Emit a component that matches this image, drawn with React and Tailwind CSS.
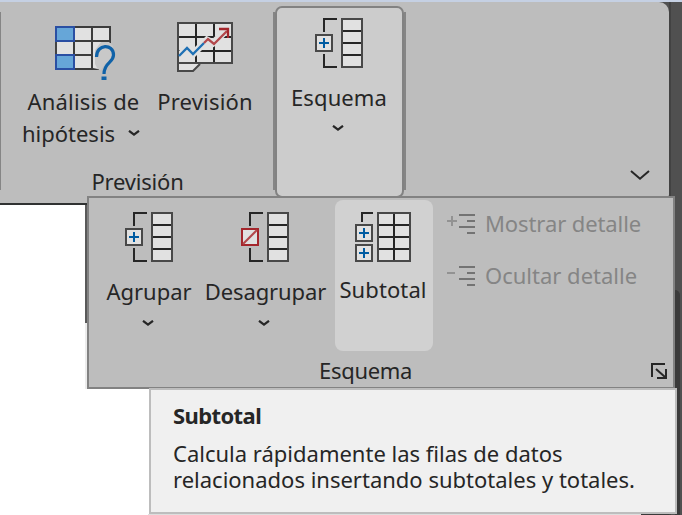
import clsx from "clsx";

function Chevron({ className }) {
  return (
    <svg className={clsx("h-[6px] w-[12px] shrink-0", className)} viewBox="0 0 12 6" fill="none">
      <path d="M1 0.8L6 4.6L11 0.8" stroke="#262626" strokeWidth="2.2" />
    </svg>
  );
}

function WhatIfIcon() {
  return (
    <svg className="h-[56px] w-[62px]" viewBox="0 0 62 56" fill="none">
      <path d="M1 1H55V17H37V43H1Z" fill="#e1e1e1" />
      <path d="M1 43H44M1 1H55V17M1 15H54M1 29H37M19 1V43M37 1V43" stroke="#3c3c3c" strokeWidth="2" />
      <path d="M38 20L44 16H54L58 20V32L50 38L46 44L38 42Z" fill="#c8c8c8" />
      <path d="M38 16H46L40 24V38L42 42H38Z" fill="#e1e1e1" />
      <path d="M1 1H19V15H1ZM1 29H19V43H1Z" fill="#66a6d8" stroke="#2a4fa3" strokeWidth="2" />
      <path d="M1 16V28" stroke="#444" strokeWidth="2" />
      <path d="M41.5 31C41.5 17.5 58.5 17.5 58.5 29C58.5 37 49 36 49 48" stroke="#1062a8" strokeWidth="3.2" />
      <path d="M46.5 50.5H51.5V54H46.5Z" fill="#1062a8" />
    </svg>
  );
}

function ForecastIcon() {
  return (
    <svg className="h-[50px] w-[56px]" viewBox="0 0 56 50" fill="none">
      <path d="M1 1H55V41H23L16 49H1Z" fill="#e1e1e1" />
      <path d="M19 1V41M37 1V41M1 15H54M1 29H54" stroke="#262626" strokeWidth="2" />
      <path d="M2 34L10 26L16 32L30 18L36 21L50 8" stroke="#e1e1e1" strokeWidth="7" />
      <path d="M1 1H55V41H1ZM1 41V49H16L23 42" stroke="#484848" strokeWidth="2" />
      <path d="M2 34L10 26L16 32L27 21" stroke="#1e70b4" strokeWidth="2.3" />
      <path d="M27 21L31 17L37 22L50 9" stroke="#b2474b" strokeWidth="2.3" />
      <path d="M42 7H51V16" stroke="#a4262c" strokeWidth="2.3" />
    </svg>
  );
}

function OutlineIcon({ removed }) {
  return (
    <svg className="h-[50px] w-[48px]" viewBox="0 0 48 50" fill="none">
      <path d="M22 1H9V14M9 36V49H22" stroke="#262626" strokeWidth="2" />
      <path d="M27 1H47V49H27Z" fill="#e1e1e1" stroke="#484848" strokeWidth="2" />
      <path d="M28 13H46M28 25H46M28 37H46" stroke="#262626" strokeWidth="2" />
      <path d="M1 17H17V33H1Z" fill="#e1e1e1" stroke={removed ? "#a4262c" : "#484848"} strokeWidth="2" />
      {removed ? (
        <path d="M2 32L16 18" stroke="#b2474b" strokeWidth="2" />
      ) : (
        <path d="M4 25H14M9 20V30" stroke="#005ba1" strokeWidth="2" />
      )}
    </svg>
  );
}

function SubtotalIcon() {
  return (
    <svg className="h-[50px] w-[56px]" viewBox="0 0 56 50" fill="none">
      <path d="M18 1H7V10" stroke="#262626" strokeWidth="2" />
      <path d="M1 13H17V29H1ZM1 33H17V49H1ZM23 1H55V49H23Z" fill="#e1e1e1" stroke="#484848" strokeWidth="2" />
      <path d="M24 13H54M24 25H54M24 37H54M39 2V48" stroke="#262626" strokeWidth="2" />
      <path d="M4 21H14M9 16V26M4 41H14M9 36V46" stroke="#005ba1" strokeWidth="2" />
    </svg>
  );
}

function DetailIcon({ plus }) {
  return (
    <svg className="h-[22px] w-[28px] shrink-0" viewBox="0 0 28 22" fill="none">
      <path d={plus ? "M0 8H10M5 3V13" : "M0 8H8"} stroke="#929292" strokeWidth="2" />
      <path d="M12 2H28M20 8H28M12 14H28M20 20H28" stroke="#737373" strokeWidth="2" />
    </svg>
  );
}

function Ribbon() {
  return (
    <div className="flex h-[203px] w-[669px] rounded-r-[10px] border-b-2 border-[#303232] bg-[#bdbdbd]">
      <div className="mt-[10px] h-[178px] w-px bg-[#858585]" />
      <div className="flex w-[272px] flex-col">
        <div className="flex h-[163px]">
          <div className="ml-[21px] flex w-[120px] flex-col items-center pt-[24px]">
            <div className="ml-[8px] flex w-[62px]">
              <WhatIfIcon />
            </div>
            <div className="mt-[3px] pl-[3px] leading-[32px] tracking-[0.2px] whitespace-nowrap">Análisis de</div>
            <div className="mr-[2px] flex items-center gap-[13px] leading-[32px]">
              <span>hipótesis</span>
              <Chevron />
            </div>
          </div>
          <div className="ml-[10px] flex w-[106px] flex-col items-center pt-[20px]">
            <ForecastIcon />
            <div className="mt-[13px] leading-[32px] tracking-[0.2px]">Previsión</div>
          </div>
        </div>
        <div className="pl-px text-center leading-[32px] tracking-[-0.2px]">Previsión</div>
      </div>
      <div className="mt-[10px] h-[178px] w-[2px] bg-[#858585]" />
      <div className="mt-[4px] flex h-[192px] w-[129px] flex-col items-center rounded-[7px] border-2 border-[#828282] bg-[#cccccc] pt-[10px] pr-[2px]">
        <OutlineIcon />
        <div className="mt-[13px] pl-px leading-[32px] tracking-[0.1px]">Esquema</div>
        <Chevron className="mt-[12px] mr-[2px]" />
      </div>
      <div className="mt-[10px] h-[178px] w-[2px] bg-[#858585]" />
      <div className="flex flex-1 items-end justify-end pr-[19px] pb-[23px]">
        <svg className="h-[10px] w-[20px]" viewBox="0 0 20 10" fill="none">
          <path d="M1 1L10 8.7L19 1" stroke="#262626" strokeWidth="2" />
        </svg>
      </div>
    </div>
  );
}

function OutlineMenu() {
  return (
    <div className="absolute top-[196px] left-[87px] flex h-[193px] w-[588px] flex-col border-2 border-[#828282] bg-[#bdbdbd]">
      <div className="flex h-[154px] pt-[2px]">
        <div className="ml-[15px] flex w-[90px] flex-col items-center pt-[12px]">
          <OutlineIcon />
          <div className="mt-[13px] leading-[32px]">Agrupar</div>
          <Chevron className="mt-[13px] mr-[2px]" />
        </div>
        <div className="ml-[10px] flex w-[122px] flex-col items-center pt-[12px]">
          <OutlineIcon removed />
          <div className="mt-[13px] pl-px leading-[32px] tracking-[-0.1px]">Desagrupar</div>
          <Chevron className="mt-[13px] mr-[2px]" />
        </div>
        <div className="ml-[9px] flex w-[98px] flex-col items-center rounded-[8px] bg-[#d1d1d1] pt-[12px] pr-[2px]">
          <SubtotalIcon />
          <div className="mt-[11px] leading-[32px] tracking-[0.1px]">Subtotal</div>
        </div>
        <div className="ml-[14px] flex flex-col gap-[20px] pt-[8px] text-[#858585]">
          <div className="flex h-[32px] items-center gap-[10px] whitespace-nowrap">
            <DetailIcon plus />
            <span className="pb-[2px] tracking-[-0.1px]">Mostrar detalle</span>
          </div>
          <div className="flex h-[32px] items-center gap-[10px] whitespace-nowrap">
            <DetailIcon />
            <span className="pb-[2px]">Ocultar detalle</span>
          </div>
        </div>
      </div>
      <div className="flex flex-1 items-center pl-[230px]">
        <span className="pt-[3px] tracking-[-0.3px]">Esquema</span>
        <svg className="mt-[3px] mr-[6px] ml-auto h-[16px] w-[16px]" viewBox="0 0 16 16" fill="none">
          <path d="M14 1H1V14M6 15H15V6M5 6L14 14" stroke="#262626" strokeWidth="2" />
        </svg>
      </div>
    </div>
  );
}

function Tooltip() {
  return (
    <div className="absolute top-[388px] left-[149px] h-[126px] w-[528px] border-2 border-[#bdbdbd] bg-[#f0f0f0] pt-[11px] pl-[22px]">
      <div className="leading-[28px] font-bold tracking-[-0.6px]">Subtotal</div>
      <div className="mt-[11px] flex flex-col leading-[26px] whitespace-nowrap">
        <span>Calcula rápidamente las filas de datos</span>
        <span>relacionados insertando subtotales y totales.</span>
      </div>
    </div>
  );
}

export default function App() {
  return (
    <div className="relative h-[515px] w-[682px] overflow-hidden bg-white font-['Noto_Sans',sans-serif] text-[22px] text-[#262626]">
      <div className="h-[2px] bg-[#c5d0e3]" />
      <div className="flex h-[513px]">
        <div className="flex w-[669px] flex-col">
          <div className="h-[203px] bg-[linear-gradient(90deg,#303232_50%,#505050_50%)]">
            <Ribbon />
          </div>
          <div className="mt-auto ml-[148px] flex h-px bg-[#dedede]">
            <div className="ml-auto h-px w-[28px] bg-[#3a3a3a]" />
          </div>
        </div>
        <div className="flex flex-1 bg-[#505050]">
          <div className="h-full w-[2px] bg-[#424242]" />
          <div className="mt-[288px] ml-[4px] flex-1 rounded-tr-[5px] bg-[#3a3a3a]" />
          <div className="w-[2px]" />
        </div>
      </div>
      <div className="absolute top-[205px] left-[85px] h-[118px] w-[2px] bg-[#5a5a5a]" />
      <div className="absolute top-[323px] left-[85px] h-[66px] w-[2px] bg-[#ececec]" />
      <OutlineMenu />
      <Tooltip />
    </div>
  );
}
